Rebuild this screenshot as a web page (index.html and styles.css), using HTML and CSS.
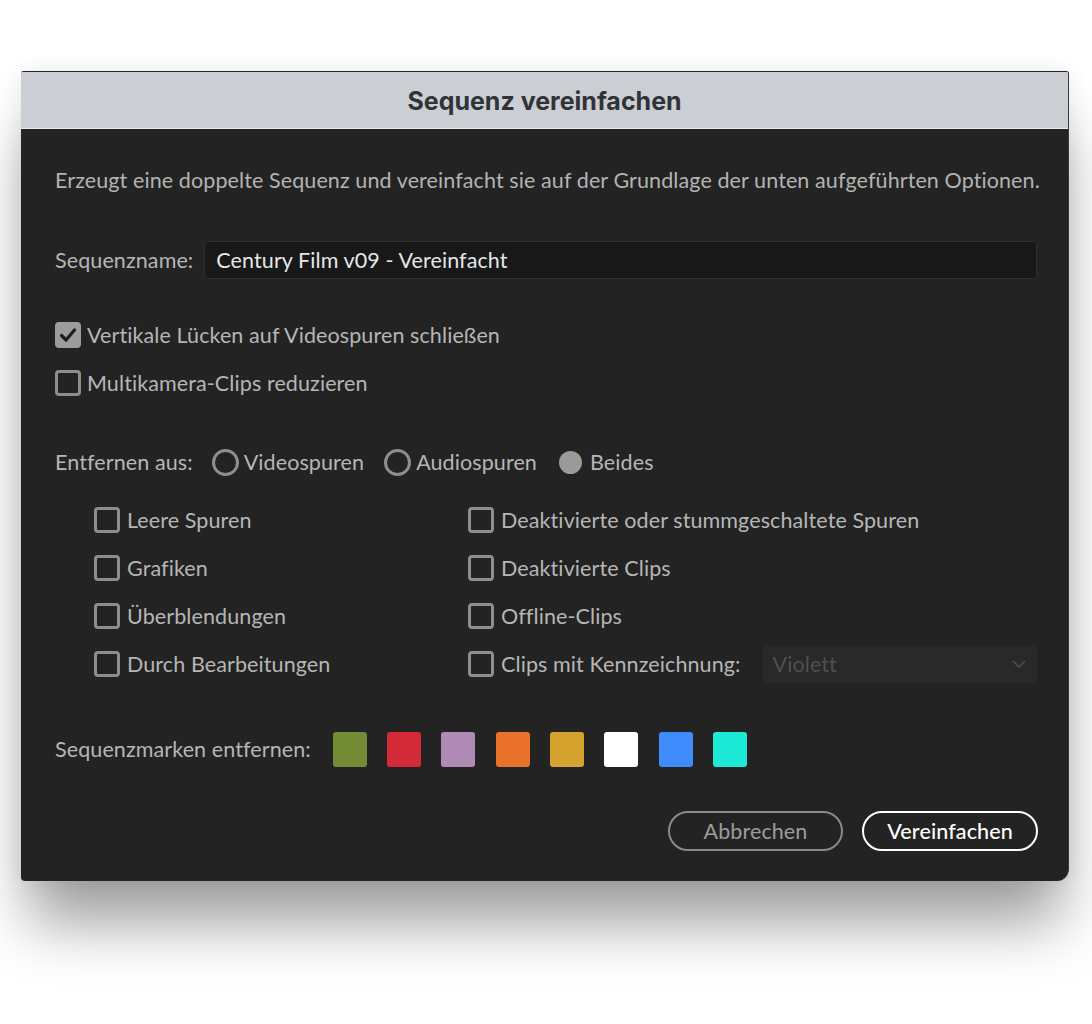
FILE: index.html
```html
<!DOCTYPE html>
<html lang="de">
<head>
<meta charset="utf-8">
<title>Sequenz vereinfachen</title>
<link rel="stylesheet" href="styles.css">
</head>
<body>
<div class="stage">
  <div class="dialog">
    <div class="titlebar">Sequenz vereinfachen</div>
    <div class="body">
      <p class="desc">Erzeugt eine doppelte Sequenz und vereinfacht sie auf der Grundlage der unten aufgeführten Optionen.</p>

      <div class="name-row">
        <span class="label">Sequenzname:</span>
        <div class="input">Century Film v09 - Vereinfacht</div>
      </div>

      <div class="check-row first">
        <span class="box checked"><svg viewBox="0 0 26 26" width="26" height="26"><path d="M6.5 13.5 L11 18 L19.5 8" fill="none" stroke="#1f1f1f" stroke-width="3.2" stroke-linecap="round" stroke-linejoin="round"/></svg></span>
        <span class="label">Vertikale Lücken auf Videospuren schließen</span>
      </div>
      <div class="check-row second">
        <span class="box"></span>
        <span class="label">Multikamera-Clips reduzieren</span>
      </div>

      <div class="radio-row">
        <span class="label">Entfernen aus:</span>
        <span class="radio-item first-radio"><span class="radio"></span><span class="label">Videospuren</span></span>
        <span class="radio-item"><span class="radio"></span><span class="label">Audiospuren</span></span>
        <span class="radio-item sel"><span class="radio filled"></span><span class="label">Beides</span></span>
      </div>

      <div class="grid">
        <div class="cell"><span class="box"></span><span class="label">Leere Spuren</span></div>
        <div class="cell"><span class="box"></span><span class="label">Deaktivierte oder stummgeschaltete Spuren</span></div>
        <div class="cell"><span class="box"></span><span class="label">Grafiken</span></div>
        <div class="cell"><span class="box"></span><span class="label">Deaktivierte Clips</span></div>
        <div class="cell"><span class="box"></span><span class="label">Überblendungen</span></div>
        <div class="cell"><span class="box"></span><span class="label">Offline-Clips</span></div>
        <div class="cell"><span class="box"></span><span class="label">Durch Bearbeitungen</span></div>
        <div class="cell">
          <span class="box"></span><span class="label">Clips mit Kennzeichnung:</span>
          <div class="select"><span>Violett</span><svg viewBox="0 0 14 8" width="14" height="8"><path d="M1 1 L7 7 L13 1" fill="none" stroke="#4e4e4e" stroke-width="1.6"/></svg></div>
        </div>
      </div>

      <div class="marks-row">
        <span class="label">Sequenzmarken entfernen:</span>
        <div class="swatches">
          <span class="sw olive"></span>
          <span class="sw red"></span>
          <span class="sw lilac"></span>
          <span class="sw orange"></span>
          <span class="sw gold"></span>
          <span class="sw white"></span>
          <span class="sw blue"></span>
          <span class="sw cyan"></span>
        </div>
      </div>

      <div class="buttons">
        <button class="btn cancel">Abbrechen</button>
        <button class="btn primary">Vereinfachen</button>
      </div>
    </div>
  </div>
</div>
</body>
</html>
```
FILE: styles.css
```css
html, body {
  margin: 0;
  padding: 0;
  background: #ffffff;
}
body {
  width: 1092px;
  height: 1024px;
  overflow: hidden;
  font-family: "Lato", "Noto Sans", sans-serif;
}
.stage {
  padding: 71px 0 0 21px;
}
.dialog {
  width: 1048px;
  background: #232323;
  border-radius: 3px 3px 12px 4px;
  box-shadow: 0 50px 60px -8px rgba(0,0,0,0.38), 0 0 22px rgba(0,0,0,0.08);
  border-right: 1px solid #3a3a3a;
  box-sizing: border-box;
  overflow: hidden;
}
.titlebar {
  height: 58px;
  box-sizing: border-box;
  background: #cbced2;
  border-top: 1px solid #1e2530;
  border-bottom: 1px solid #e8eaec;
  display: flex;
  align-items: center;
  justify-content: center;
  font-family: "Inter", "Open Sans", sans-serif;
  font-weight: 700;
  font-size: 25px;
  color: #303338;
  padding-top: 1px;
}
.body {
  padding: 37px 31px 30px 34px;
  color: #b6b6b6;
  font-size: 21.5px;
  letter-spacing: 0.1px;
}
.label {
  line-height: 28px;
  white-space: nowrap;
}
.desc {
  margin: 0;
  line-height: 28px;
  white-space: nowrap;
  color: #b3b3b3;
}
.name-row {
  display: flex;
  align-items: center;
  gap: 11px;
  margin-top: 47px;
}
.input {
  flex: 1;
  height: 38px;
  box-sizing: border-box;
  background: #181818;
  border: 1px solid #2f2f2f;
  border-radius: 4px;
  padding: 0 11px;
  display: flex;
  align-items: center;
  color: #e6e6e6;
}
.check-row {
  display: flex;
  align-items: center;
  gap: 6px;
  height: 32px;
}
.check-row.first { margin-top: 40px; }
.check-row.second { margin-top: 16px; }
.box {
  width: 26px;
  height: 26px;
  box-sizing: border-box;
  border: 3px solid #8d8d8d;
  border-radius: 4px;
  flex: none;
  display: block;
}
.box.checked {
  background: #9c9c9c;
  border-color: #9c9c9c;
  position: relative;
}
.box.checked svg {
  position: absolute;
  left: -3px;
  top: -3px;
}
.radio-row {
  display: flex;
  align-items: center;
  height: 32px;
  margin-top: 47px;
}
.radio-item {
  display: flex;
  align-items: center;
  gap: 5px;
  margin-left: 20px;
}
.radio-item.first-radio { margin-left: 19px; }
.radio-item.sel { margin-left: 22px; gap: 8px; }
.radio {
  width: 27px;
  height: 27px;
  box-sizing: border-box;
  border: 3px solid #8e8e8e;
  border-radius: 50%;
  display: block;
}
.radio.filled {
  width: 23px;
  height: 23px;
  border: none;
  background: #9a9a9a;
}
.grid {
  display: grid;
  grid-template-columns: 374px 1fr;
  grid-auto-rows: 37px;
  row-gap: 11.3px;
  margin: 23px 0 0 39px;
}
.cell {
  display: flex;
  align-items: center;
  gap: 7px;
}
.select {
  margin-left: 15px;
  flex: 1;
  height: 37px;
  background: #292929;
  border-radius: 3px;
  display: flex;
  align-items: center;
  justify-content: space-between;
  padding: 0 11px 0 10px;
  color: #4f4f4f;
}
.marks-row {
  display: flex;
  align-items: center;
  gap: 22px;
  margin-top: 49px;
}
.swatches {
  display: flex;
  gap: 20.3px;
}
.sw {
  width: 34px;
  height: 35px;
  border-radius: 3px;
  display: block;
}
.olive { background: #738b35; }
.red { background: #d52a37; }
.lilac { background: #b08bb6; }
.orange { background: #e9722a; }
.gold { background: #d5a22e; }
.white { background: #ffffff; }
.blue { background: #3f8bfb; }
.cyan { background: #1ce9d6; }
.buttons {
  display: flex;
  justify-content: flex-end;
  gap: 19px;
  margin-top: 44px;
}
.btn {
  height: 40px;
  border-radius: 20px;
  background: transparent;
  font-family: "Lato", "Noto Sans", sans-serif;
  font-size: 21.5px;
  letter-spacing: 0.1px;
  padding: 0;
  box-sizing: border-box;
}
.btn.cancel {
  width: 175px;
  border: 2px solid #8a8a8a;
  color: #9c9c9c;
}
.btn.primary {
  width: 176px;
  border: 2.5px solid #ffffff;
  color: #ffffff;
  font-weight: 500;
  margin-right: -1px;
}
```
